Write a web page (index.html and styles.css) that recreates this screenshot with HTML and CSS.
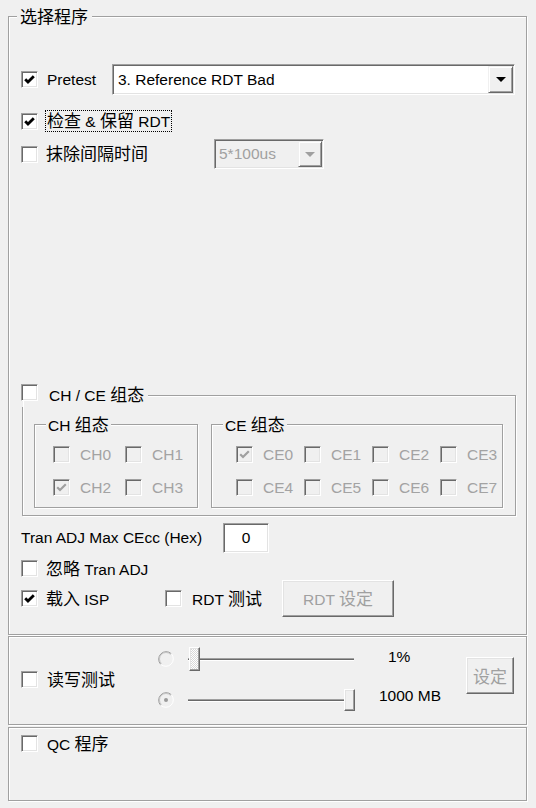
FILE: index.html
```html
<!DOCTYPE html>
<html lang="zh-CN">
<head>
<meta charset="utf-8">
<title>选择程序</title>
<link rel="stylesheet" href="styles.css">
</head>
<body>
<fieldset class="main etched">
  <legend class="main-title"><span class="zh">选择程序</span></legend>

  <div class="row r-pretest">
    <span class="cb"><svg viewBox="0 0 15 15"><path d="M3.2 7.2L6 10l5.8-5.8"/></svg></span>
    <span class="lbl pretest-lbl">Pretest</span>
    <div class="combo">
      <span class="combo-text">3. Reference RDT Bad</span>
      <span class="drop"><span class="arrow"></span></span>
    </div>
  </div>

  <div class="row r-check">
    <span class="cb"><svg viewBox="0 0 15 15"><path d="M3.2 7.2L6 10l5.8-5.8"/></svg></span>
    <span class="focus"><span class="zh">检查</span> &amp; <span class="zh">保留</span> RDT</span>
  </div>

  <div class="row r-erase">
    <span class="cb"></span>
    <span class="lbl erase-lbl"><span class="zh">抹除间隔时间</span></span>
    <div class="combo dis">
      <span class="combo-text">5*100us</span>
      <span class="drop"><span class="arrow"></span></span>
    </div>
  </div>

  <fieldset class="chce etched">
    <legend class="chce-title">
      <span class="cb"></span>
      <span class="chce-lbl">CH / CE <span class="zh">组态</span></span>
    </legend>
    <div class="subs">
      <fieldset class="sub ch etched">
        <legend class="sub-title">CH <span class="zh">组态</span></legend>
        <div class="grid">
          <div class="item"><span class="cb dis"></span><span class="dlbl">CH0</span></div>
          <div class="item"><span class="cb dis"></span><span class="dlbl">CH1</span></div>
          <div class="item"><span class="cb dis"><svg viewBox="0 0 15 15"><path d="M3.2 7.2L6 10l5.8-5.8"/></svg></span><span class="dlbl">CH2</span></div>
          <div class="item"><span class="cb dis"></span><span class="dlbl">CH3</span></div>
        </div>
      </fieldset>
      <fieldset class="sub ce etched">
        <legend class="sub-title">CE <span class="zh">组态</span></legend>
        <div class="grid">
          <div class="item"><span class="cb dis"><svg viewBox="0 0 15 15"><path d="M3.2 7.2L6 10l5.8-5.8"/></svg></span><span class="dlbl">CE0</span></div>
          <div class="item"><span class="cb dis"></span><span class="dlbl">CE1</span></div>
          <div class="item"><span class="cb dis"></span><span class="dlbl">CE2</span></div>
          <div class="item"><span class="cb dis"></span><span class="dlbl">CE3</span></div>
          <div class="item"><span class="cb dis"></span><span class="dlbl">CE4</span></div>
          <div class="item"><span class="cb dis"></span><span class="dlbl">CE5</span></div>
          <div class="item"><span class="cb dis"></span><span class="dlbl">CE6</span></div>
          <div class="item"><span class="cb dis"></span><span class="dlbl">CE7</span></div>
        </div>
      </fieldset>
    </div>
  </fieldset>

  <div class="row r-tran">
    <span class="tran-lbl">Tran ADJ Max CEcc (Hex)</span>
    <span class="edit">0</span>
  </div>

  <div class="row r-ignore">
    <span class="cb"></span>
    <span class="lbl"><span class="zh">忽略</span> Tran ADJ</span>
  </div>

  <div class="row r-isp">
    <div class="cell1">
      <span class="cb"><svg viewBox="0 0 15 15"><path d="M3.2 7.2L6 10l5.8-5.8"/></svg></span>
      <span class="lbl"><span class="zh">载入</span> ISP</span>
    </div>
    <div class="cell2">
      <span class="cb"></span>
      <span class="lbl rdt-lbl">RDT <span class="zh">测试</span></span>
    </div>
    <span class="btn btn-rdt"><span class="btn-text">RDT <span class="zh">设定</span></span></span>
  </div>
</fieldset>

<div class="panel rw etched">
  <div class="rw-check">
    <span class="cb"></span>
    <span class="lbl qc-lbl"><span class="zh">读写测试</span></span>
  </div>
  <svg class="radio radio1" viewBox="0 0 16 16">
    <path d="M13.3 2.7A7.5 7.5 0 0 0 2.7 13.3" fill="none" stroke="#9a9a9a"/>
    <path d="M12.6 3.4A6.5 6.5 0 0 0 3.4 12.6" fill="none" stroke="#c4c4c4"/>
    <path d="M2.7 13.3A7.5 7.5 0 0 0 13.3 2.7" fill="none" stroke="#ffffff"/>
  </svg>
  <div class="slider slider1"><span class="thumb thumb1"></span></div>
  <span class="val val1">1%</span>
  <svg class="radio radio2" viewBox="0 0 16 16">
    <path d="M13.3 2.7A7.5 7.5 0 0 0 2.7 13.3" fill="none" stroke="#9a9a9a"/>
    <path d="M12.6 3.4A6.5 6.5 0 0 0 3.4 12.6" fill="none" stroke="#c4c4c4"/>
    <path d="M2.7 13.3A7.5 7.5 0 0 0 13.3 2.7" fill="none" stroke="#ffffff"/>
    <circle cx="8" cy="8" r="2" fill="#9a9a9a"/>
  </svg>
  <div class="slider slider2"><span class="thumb thumb2"></span></div>
  <span class="val val2">1000 MB</span>
  <span class="btn btn-set"><span class="zh">设定</span></span>
</div>

<div class="panel qc etched">
  <div class="row r-qc">
    <span class="cb"></span>
    <span class="lbl qc-lbl">QC <span class="zh">程序</span></span>
  </div>
</div>
</body>
</html>
```
FILE: styles.css
```css
* { box-sizing: border-box; }
html, body { margin: 0; padding: 0; background: #f0f0f0; }
body {
  width: 536px;
  height: 808px;
  overflow: hidden;
  font-family: "Liberation Sans", "Noto Sans CJK SC", sans-serif;
  font-size: 15.5px;
  line-height: 18px;
  color: #000;
}
.zh { font-family: "Noto Sans CJK SC", "Liberation Sans", sans-serif; font-size: 17px; }

.etched {
  border: 1px solid #a0a0a0;
  box-shadow: inset 1px 1px 0 #fff, 1px 1px 0 #fff;
}
fieldset { margin: 0; min-width: 0; }
legend { padding: 0; }

/* main group */
.main { margin: 7px 9px 0 8px; padding: 0 11px 17px 12px; }
.main-title { margin-left: -4px; padding: 0 4px 0 3px; height: 18px; line-height: 18px; background: #f0f0f0; }

.row { display: flex; align-items: center; }
.r-pretest { margin-top: 39px; height: 31px; }
.r-check { margin-top: 15px; height: 22px; }
.r-erase { margin-top: 7px; height: 30px; }

/* checkbox */
.cb {
  flex: none;
  display: flex;
  width: 17px;
  height: 17px;
  background: #fff;
  border: 1px solid;
  border-color: #a0a0a0 #fff #fff #a0a0a0;
  box-shadow: inset 1px 1px 0 #696969, inset -1px -1px 0 #e3e3e3;
}
.cb svg { width: 15px; height: 15px; }
.cb svg path { fill: none; stroke: #000; stroke-width: 2.8; stroke-linejoin: miter; }
.cb.dis { background: #f0f0f0; }
.cb.dis svg path { stroke: #a0a0a0; stroke-width: 2.2; }

.lbl { margin-left: 8px; white-space: nowrap; }
.pretest-lbl { margin-left: 9px; width: 65px; flex: none; }
.erase-lbl { width: 168px; flex: none; }
.focus { margin-left: 7px; border: 1px dotted #000; line-height: 18px; padding: 0 1px; white-space: nowrap; }

/* combo */
.combo {
  flex: 1;
  display: flex;
  height: 31px;
  padding: 1px;
  background: #fff;
  border: 1px solid;
  border-color: #a0a0a0 #fff #fff #a0a0a0;
  box-shadow: inset 1px 1px 0 #696969, inset -1px -1px 0 #e3e3e3;
}
.combo-text { flex: 1; display: flex; align-items: center; padding-left: 4px; white-space: nowrap; }
.drop {
  flex: none;
  width: 25px;
  display: flex;
  align-items: center;
  justify-content: center;
  background: #f0f0f0;
  border: 1px solid;
  border-color: #f0f0f0 #696969 #696969 #f0f0f0;
  box-shadow: inset 1px 1px 0 #fff, inset -1px -1px 0 #a0a0a0;
}
.arrow { width: 0; height: 0; border-left: 5px solid transparent; border-right: 5px solid transparent; border-top: 5px solid #000; }
.combo.dis { flex: none; width: 110px; height: 30px; background: #f0f0f0; }
.combo.dis .combo-text { color: #a0a0a0; padding-left: 3px; }
.combo.dis .drop { width: 24px; }
.combo.dis .arrow { border-top-color: #a0a0a0; }

/* CH / CE group */
.chce { margin: 214px -1px 0 1px; padding: 0 0 7px 0; }
.chce-title { margin-left: -2px; height: 24px; display: flex; align-items: center; }
.chce-title .cb { align-self: flex-start; margin-top: 1px; }
.chce-lbl { padding: 0 4px 0 11px; line-height: 24px; background: #f0f0f0; white-space: nowrap; }

.subs { display: flex; gap: 13px; margin: 8px 0 0 11px; }
.sub { flex: none; padding: 0 0 11px 0; }
.sub.ch { width: 164px; }
.sub.ce { width: 292px; }
.sub-title { margin-left: 11px; padding: 0 2px; height: 18px; line-height: 18px; background: #f0f0f0; white-space: nowrap; }
.grid { display: grid; grid-auto-rows: 17px; row-gap: 16px; margin-top: 13px; }
.ch .grid { grid-template-columns: repeat(2, 72px); margin-left: 18px; }
.ce .grid { grid-template-columns: repeat(4, 68px); margin-left: 24px; }
.item { display: flex; align-items: center; }
.dlbl { margin-left: 10px; color: #a3a3a3; line-height: 17px; }

/* rows below */
.r-tran { margin-top: 7px; height: 30px; }
.tran-lbl { width: 202px; flex: none; white-space: nowrap; }
.edit {
  flex: none;
  width: 46px;
  height: 30px;
  display: flex;
  align-items: center;
  justify-content: center;
  background: #fff;
  border: 1px solid;
  border-color: #a0a0a0 #fff #fff #a0a0a0;
  box-shadow: inset 1px 1px 0 #696969, inset -1px -1px 0 #e3e3e3;
}
.r-ignore { margin-top: 7px; height: 17px; }
.r-isp { margin-top: 3px; height: 37px; }
.cell1 { flex: none; width: 144px; display: flex; align-items: center; }
.cell2 { flex: none; width: 117px; display: flex; align-items: center; }
.rdt-lbl { margin-left: 10px; }

.btn {
  flex: none;
  display: flex;
  align-items: center;
  justify-content: center;
  color: #a0a0a0;
  background: #f0f0f0;
  border: 1px solid;
  border-color: #fff #696969 #696969 #fff;
  box-shadow: inset -1px -1px 0 #a0a0a0, inset 1px 1px 0 #e3e3e3;
  white-space: nowrap;
}
.btn-rdt { width: 112px; height: 37px; }
.btn-text { white-space: pre; }

/* read/write panel */
.panel { margin: 1px 9px 0 8px; }
.rw {
  height: 89px;
  padding: 10px 12px 0 12px;
  display: grid;
  grid-template-columns: 137px 17px 180px 1fr 48px;
  grid-template-rows: 24px 24px;
  row-gap: 17px;
}
.rw-check { grid-column: 1; grid-row: 1 / 3; display: flex; align-items: center; }
.qc-lbl { margin-left: 9px; }
.radio { width: 16px; height: 16px; align-self: center; }
.radio1 { grid-column: 2; grid-row: 1; }
.radio2 { grid-column: 2; grid-row: 2; }
.slider {
  width: 168px;
  height: 24px;
  margin-left: 12px;
  display: flex;
  align-items: center;
  background:
    linear-gradient(#a0a0a0, #a0a0a0) 1px 11px / 166px 1px no-repeat,
    linear-gradient(#696969, #696969) 1px 12px / 166px 1px no-repeat,
    linear-gradient(#fff, #fff) 1px 13px / 166px 1px no-repeat;
}
.slider1 { grid-column: 3; grid-row: 1; }
.slider2 { grid-column: 3; grid-row: 2; }
.thumb {
  width: 11px;
  border: 1px solid;
  border-color: #fff #696969 #696969 #fff;
  box-shadow: inset -1px -1px 0 #a0a0a0, inset 1px 1px 0 #e3e3e3;
  background: #f0f0f0;
}
.thumb1 {
  height: 24px;
  margin-left: 2px;
  background: repeating-conic-gradient(#fff 0 25%, #d8d8d8 0 50%) 0 0 / 2px 2px;
}
.thumb2 { height: 22px; margin-left: auto; }
.val { align-self: start; white-space: nowrap; }
.val1 { grid-column: 4; grid-row: 1; line-height: 20px; margin-left: 33px; }
.val2 { grid-column: 4; grid-row: 2; line-height: 16px; margin-left: 24px; }
.btn-set { grid-column: 5; grid-row: 1 / 3; align-self: start; margin-top: 10px; height: 37px; width: 48px; }

/* QC panel */
.qc { margin-top: 2px; height: 74px; padding: 7px 12px; }
.r-qc { height: 17px; }
```
